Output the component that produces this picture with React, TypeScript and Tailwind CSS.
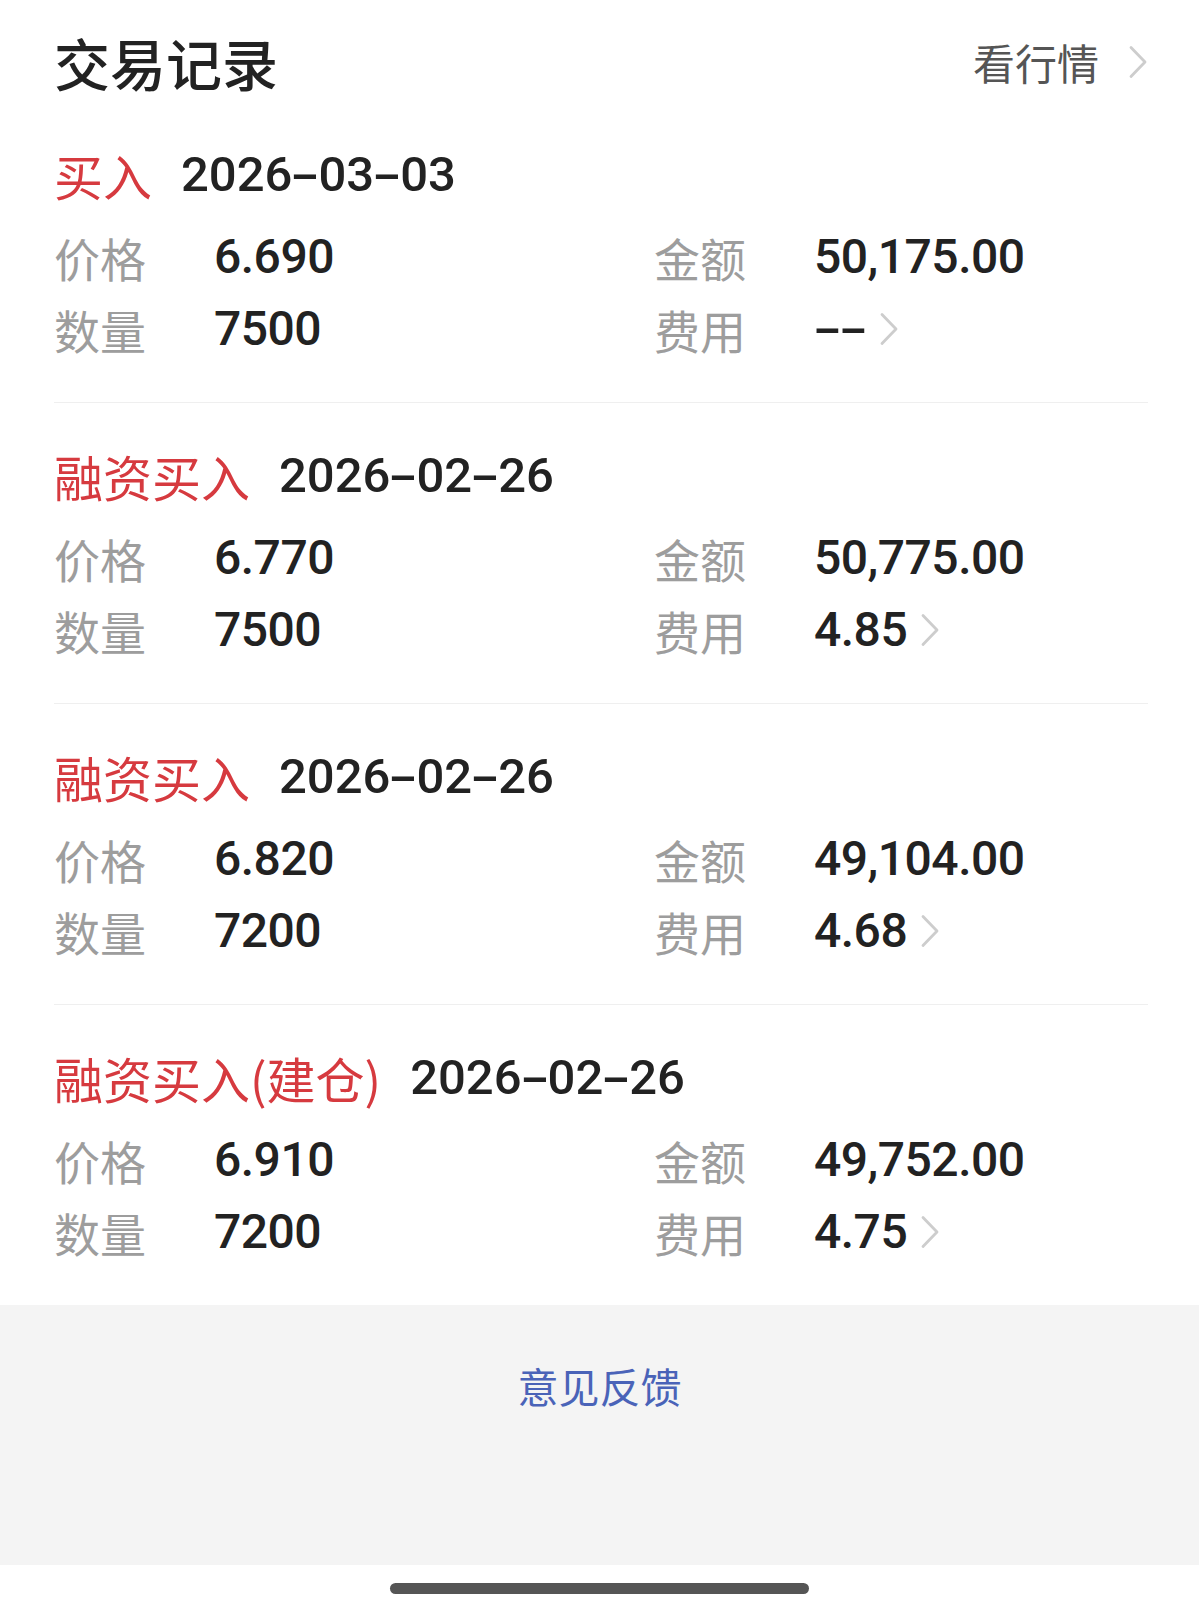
import { Fragment } from "react";

type Trade = {
  side: string;
  date: string;
  price: string;
  amount: string;
  qty: string;
  fee: string;
};

const TRADES: Trade[] = [
  { side: "买入", date: "2026-03-03", price: "6.690", amount: "50,175.00", qty: "7500", fee: "--" },
  { side: "融资买入", date: "2026-02-26", price: "6.770", amount: "50,775.00", qty: "7500", fee: "4.85" },
  { side: "融资买入", date: "2026-02-26", price: "6.820", amount: "49,104.00", qty: "7200", fee: "4.68" },
  { side: "融资买入(建仓)", date: "2026-02-26", price: "6.910", amount: "49,752.00", qty: "7200", fee: "4.75" },
];

const CJK = "font-['Noto_Sans_CJK_SC','Noto_Sans',sans-serif]";
const NUM = "font-['Roboto','Noto_Sans_CJK_SC',sans-serif]";

// the app's number font draws "-" as a wide dash
function Num({ value }: { value: string }) {
  const parts = value.split("-");
  return (
    <>
      {parts.map((p, i) => (
        <Fragment key={i}>
          {i > 0 && (
            <span className="inline-block w-[26px] scale-x-[1.75] text-center">-</span>
          )}
          {p}
        </Fragment>
      ))}
    </>
  );
}

function Chevron({ className = "" }: { className?: string }) {
  return (
    <svg
      width="20"
      height="34"
      viewBox="0 0 20 34"
      fill="none"
      className={className}
    >
      <path
        d="M3 2.5L17 17L3 31.5"
        stroke="#cdcdcd"
        strokeWidth="2.8"
        strokeLinecap="round"
        strokeLinejoin="round"
      />
    </svg>
  );
}

function Field({
  label,
  value,
  arrow,
}: {
  label: string;
  value: string;
  arrow?: boolean;
}) {
  return (
    <div className="flex h-[72px] items-center">
      <span className={`${CJK} w-[160px] shrink-0 text-[46px] leading-none text-[#9d9d9d]`}>
        {label}
      </span>
      <span
        className={`${NUM} text-[48px] font-medium leading-none tracking-[-0.5px] text-[#222]`}
      >
        <Num value={value} />
      </span>
      {arrow && <Chevron className="ml-[13px]" />}
    </div>
  );
}

function TradeItem({ trade, last }: { trade: Trade; last: boolean }) {
  return (
    <div
      className={`pt-[42px] pb-[37px] ${last ? "" : "border-b border-[#efefef]"}`}
    >
      <div className="flex h-[60px] items-center gap-[29px]">
        <span className={`${CJK} text-[49px] leading-none text-[#d63a3f]`}>
          {trade.side}
        </span>
        <span className={`${NUM} text-[49px] font-medium leading-none text-[#222]`}>
          <Num value={trade.date} />
        </span>
      </div>
      <div className="mt-[17px] grid grid-cols-[600px_1fr]">
        <Field label="价格" value={trade.price} />
        <Field label="金额" value={trade.amount} />
        <Field label="数量" value={trade.qty} />
        <Field label="费用" value={trade.fee} arrow />
      </div>
    </div>
  );
}

export default function App() {
  return (
    <div className="flex min-h-[1613px] w-full flex-col bg-white">
      <div className="pl-[54px] pr-[51px]">
        <div className="mt-[22px] flex h-[80px] items-center justify-between">
          <h1 className={`${CJK} text-[56px] font-medium leading-none text-[#222]`}>
            交易记录
          </h1>
          <button className="flex items-center gap-[29px]">
            <span className={`${CJK} text-[42px] leading-none text-[#555]`}>
              看行情
            </span>
            <Chevron />
          </button>
        </div>

        {TRADES.map((t, i) => (
          <TradeItem key={i} trade={t} last={i === TRADES.length - 1} />
        ))}
      </div>

      <div className="flex h-[260px] justify-center bg-[#f4f4f4] pt-[56px]">
        <span className={`${CJK} text-[41px] leading-[48px] text-[#4a63b8]`}>
          意见反馈
        </span>
      </div>

      <div className="flex h-[48px] justify-center pt-[18px]">
        <div className="h-[11px] w-[419px] rounded-full bg-[#555]" />
      </div>
    </div>
  );
}
